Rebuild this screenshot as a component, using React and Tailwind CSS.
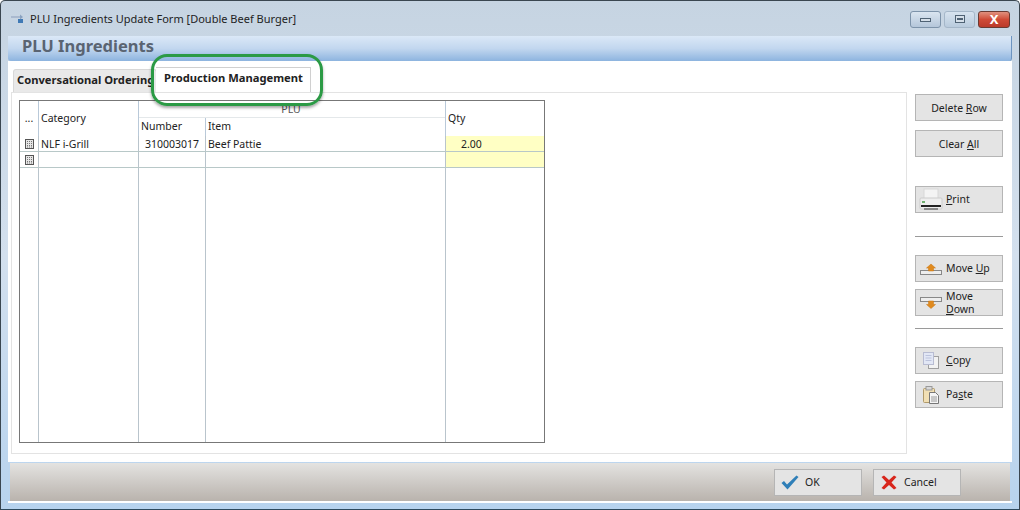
import React from "react";

const font = "font-['Noto_Sans','Liberation_Sans',sans-serif]";

function RowMarker() {
  return (
    <svg width="9" height="10" viewBox="0 0 9 10" className="block">
      <rect x="0.5" y="0.5" width="8" height="9" fill="#e6e6e6" stroke="#555" />
      <path d="M2 2.5h5M2 4.5h5M2 6.5h5M2 8h5" stroke="#777" strokeDasharray="1 1" />
    </svg>
  );
}

function PrintIcon() {
  return (
    <svg width="24" height="24" viewBox="0 0 24 24">
      <rect x="5" y="1" width="14" height="10" fill="#f4f4f4" stroke="#d8d8d8" />
      <rect x="1" y="10" width="22" height="11" rx="1" fill="#eeeeee" stroke="#cccccc" />
      <rect x="3" y="13" width="3" height="2" fill="#6fae6f" />
      <rect x="2" y="17" width="20" height="2" fill="#222" />
      <rect x="5" y="20" width="14" height="2" fill="#888" />
    </svg>
  );
}

function MoveUpIcon() {
  return (
    <svg width="22" height="14" viewBox="0 0 22 14">
      <rect x="0.5" y="8.5" width="21" height="4" fill="#eeeeee" stroke="#888" />
      <path d="M11 2l4.5 4H13.5v3h-5V6H6.5z" fill="#e08a1e" stroke="#c97510" strokeWidth="0.5" />
    </svg>
  );
}

function MoveDownIcon() {
  return (
    <svg width="22" height="14" viewBox="0 0 22 14">
      <rect x="0.5" y="1.5" width="21" height="4" fill="#eeeeee" stroke="#888" />
      <path d="M11 12.5l4.5-4H13.5V5h-5v3.5H6.5z" fill="#e08a1e" stroke="#c97510" strokeWidth="0.5" />
    </svg>
  );
}

function CopyIcon() {
  return (
    <svg width="16" height="17" viewBox="0 0 16 17">
      <rect x="5.5" y="4.5" width="10" height="12" fill="#f2f2f2" stroke="#a0a0a0" />
      <rect x="0.5" y="0.5" width="10" height="12" fill="#e2e7f5" stroke="#b8bcd2" />
      <path d="M2.5 3.5h6M2.5 6h6M2.5 8.5h6" stroke="#bcc3dc" />
    </svg>
  );
}

function PasteIcon() {
  return (
    <svg width="16" height="18" viewBox="0 0 16 18">
      <rect x="0.5" y="2.5" width="11" height="14" rx="1" fill="#f1dfb4" stroke="#b09a6a" />
      <rect x="3" y="0.5" width="6" height="3.5" fill="#d8d8d8" stroke="#999" />
      <path d="M6.5 6.5h6l3 3v8h-9z" fill="#f5f5f5" stroke="#777" />
      <path d="M8 11h6M8 13h6M8 15h6" stroke="#9a9a9a" />
    </svg>
  );
}

function CheckIcon() {
  return (
    <svg width="18" height="15" viewBox="0 0 18 15">
      <path d="M0.5 8l2.5-2 3 3.5L15.5 0.5l2 1.5L6.5 14.5z" fill="#2f7fb8" />
    </svg>
  );
}

function CrossIcon() {
  return (
    <svg width="16" height="15" viewBox="0 0 16 15">
      <path d="M0.5 2L3 0.5l5 4.5 5-4.5L15.5 2 10.5 7.5l5 5.5L13 14.5 8 10l-5 4.5L0.5 13l5-5.5z" fill="#d8261c" />
    </svg>
  );
}

function WinIcon() {
  return (
    <svg width="14" height="10" viewBox="0 0 14 10">
      <path d="M0 2h9v2H0z" fill="#a9b9cf" />
      <path d="M7 5h5v4H7z" fill="#3f79b5" />
      <path d="M9 0.5l3 2.5-3 2.5z" fill="#8aa2c0" />
    </svg>
  );
}

function Btn({ icon, className = "", children }) {
  return (
    <button className={`h-[27px] w-[88px] flex items-center bg-[#e4e4e4] border border-[#b5b5b5] text-[10.5px] leading-[13px] text-[#222] ${className}`}>
      {icon ? (
        <>
          <span className="w-[30px] shrink-0 flex justify-center">{icon}</span>
          <span className="text-left">{children}</span>
        </>
      ) : (
        <span className="w-full text-center pt-[1px]">{children}</span>
      )}
    </button>
  );
}

function Head({ className = "", children }) {
  return <div className={`border-r border-[#b9c9d9] ${className}`}>{children}</div>;
}

function DataRow({ number, category, item, qty }) {
  return (
    <div className="flex h-[16px] border-b border-[#b8c8c8] text-[10.5px] leading-[17px] text-[#222]">
      <div className="w-[19px] border-r border-[#b9c4cc] flex items-center justify-center"><RowMarker /></div>
      <div className="w-[100px] border-r border-[#b9c4cc] pl-[2px]">{category}</div>
      <div className="w-[67px] border-r border-[#b9c4cc] pl-[6px]">{number}</div>
      <div className="w-[240px] border-r border-[#b9c4cc] pl-[2px]">{item}</div>
      <div className="w-[98px] bg-[#ffffc4] pl-[15px]">{qty}</div>
    </div>
  );
}

export default function App() {
  return (
    <div className={`${font} relative w-[1020px] h-[510px] overflow-hidden flex flex-col rounded-t-[5px] border-t border-x border-[#3a4650] bg-gradient-to-b from-[#c6d4e2] via-[#d3e0ee] to-[#b7d3ee]`}>
      <div className="h-[35px] shrink-0 flex items-center pl-[10px] pr-[9px]">
        <WinIcon />
        <span className="ml-[5px] mt-[2px] text-[11px] text-[#222]">PLU Ingredients Update Form [Double Beef Burger]</span>
        <div className="ml-auto flex mt-[1px]">
          <div className="w-[31px] h-[17px] mr-[3px] rounded-[3px] border border-[#7d93aa] bg-gradient-to-b from-[#dae5f0] to-[#b4c6da] flex items-center justify-center">
            <div className="w-[11px] h-[4px] mt-[2px] bg-[#d5dfe9] border border-[#4f6274]" />
          </div>
          <div className="w-[31px] h-[17px] mr-[3px] rounded-[3px] border border-[#a5b7c9] bg-gradient-to-b from-[#d7e3ef] to-[#b9cbdd] flex items-center justify-center">
            <div className="w-[10px] h-[8px] bg-[#d5dfe9] border border-[#4f6274] flex items-center justify-center">
              <div className="w-[6px] h-[2px] bg-[#4f6274]" />
            </div>
          </div>
          <div className="w-[32px] h-[17px] rounded-[3px] border border-[#6b3a32] bg-gradient-to-b from-[#e0907e] via-[#cf4a36] to-[#bb3a2a] flex items-center justify-center text-white font-bold text-[13px] leading-none">
            X
          </div>
        </div>
      </div>

      <div className="flex-1 mx-[7px] flex flex-col min-h-0">
        <div className="h-[25px] shrink-0 rounded-b-[3px] bg-gradient-to-b from-[#dbe8f7] via-[#c2d7ef] to-[#8db4df] pl-[14px] border-r border-[#6d94c0]">
          <div className="font-bold text-[16.5px] leading-[20px] text-[#5a6472]">PLU Ingredients</div>
        </div>

        <div className="flex-1 min-h-0 bg-white flex pl-[3px] pt-[8px]">
          <div className="w-[896px] h-[385px] flex flex-col">
            <div className="h-[23px] shrink-0 flex items-end pl-[2px]">
              <div className="h-[23px] w-[144px] rounded-t-[3px] bg-[#e9e9e9] border-t border-x border-[#d8d8d8] pl-[3px] overflow-hidden whitespace-nowrap text-[11.2px] font-bold leading-[20px] text-[#222]">
                Conversational Ordering
              </div>
              <div className="h-[25px] w-[155px] -ml-[1px] bg-white border-t border-r border-[#d0d0d0] pl-[8px] text-[11.2px] font-bold leading-[20px] text-[#222]">
                Production Management
              </div>
            </div>
            <div className="h-[363px] border border-[#e3e3e3] pl-[7px] pt-[7px]">
              <div className="w-[526px] h-[343px] border border-[#777] flex flex-col">
                <div className="flex h-[35px] shrink-0 text-[10.5px] text-[#222]">
                  <Head className="w-[19px] text-center leading-[35px]">...</Head>
                  <Head className="w-[100px] pl-[2px] leading-[35px]">Category</Head>
                  <div className="w-[307px] flex flex-col border-r border-[#b9c9d9]">
                    <div className="h-[17px] border-b border-[#e4e8ea] text-center text-[10.5px] leading-[16px] text-[#555] pr-[2px]">PLU</div>
                    <div className="flex flex-1 leading-[17px]">
                      <Head className="w-[67px] pl-[2px]">Number</Head>
                      <div className="pl-[2px]">Item</div>
                    </div>
                  </div>
                  <div className="flex-1 pl-[2px] leading-[35px]">Qty</div>
                </div>
                <DataRow category="NLF i-Grill" number="310003017" item="Beef Pattie" qty="2.00" />
                <DataRow />
                <div className="flex flex-1">
                  <div className="w-[19px] border-r border-[#b9c4cc]" />
                  <div className="w-[100px] border-r border-[#b9c4cc]" />
                  <div className="w-[67px] border-r border-[#b9c4cc]" />
                  <div className="w-[240px] border-r border-[#b9c4cc]" />
                </div>
              </div>
            </div>
          </div>

          <div className="ml-[8px] w-[88px] flex flex-col mt-[25px]">
            <Btn><>Delete <u>R</u>ow</></Btn>
            <Btn className="mt-[9px]"><>Clear <u>A</u>ll</></Btn>
            <Btn className="mt-[29px]" icon={<PrintIcon />}><><u>P</u>rint</></Btn>
            <div className="h-px bg-[#9a9a9a] mt-[23px]" />
            <Btn className="mt-[18px]" icon={<MoveUpIcon />}><>Move <u>U</u>p</></Btn>
            <Btn className="mt-[7px]" icon={<MoveDownIcon />}><>Move<br /><u>D</u>own</></Btn>
            <div className="h-px bg-[#9a9a9a] mt-[12px]" />
            <Btn className="mt-[18px]" icon={<CopyIcon />}><><u>C</u>opy</></Btn>
            <Btn className="mt-[7px]" icon={<PasteIcon />}><>Pa<u>s</u>te</></Btn>
          </div>
        </div>

        <div className="h-[38px] shrink-0 mt-[1px] mx-[2px] bg-gradient-to-b from-[#e4e3e1] to-[#b9b3ad] flex items-center justify-end pr-[49px] pt-[1px]">
          <Btn icon={<CheckIcon />} className="mr-[11px]">OK</Btn>
          <Btn icon={<CrossIcon />}>Cancel</Btn>
        </div>
        <div className="h-[2px] bg-white shrink-0" />
      </div>
      <div className="h-[7px] shrink-0 border-b border-[#2e4a5e]" />

      <div className="absolute left-[150px] top-[53px] w-[172px] h-[52px] rounded-[16px] border-[3px] border-[#2b9a45] shadow-[0_2px_3px_rgba(0,0,0,0.35)]" />
    </div>
  );
}
